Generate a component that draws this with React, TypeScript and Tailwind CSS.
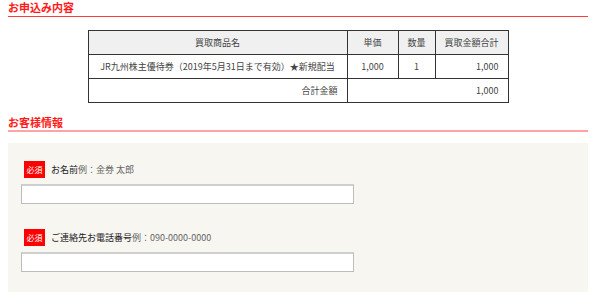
import React from "react";

const font = { fontFamily: '"Noto Sans CJK JP", "Noto Sans", sans-serif' };

function Field({ label, example }: { label: string; example: string }) {
  return (
    <div>
      <div className="flex items-center h-[17px] pl-[3px]">
        <span className="bg-[#ff0000] text-white text-[8px] w-[21px] h-[17px] flex items-center justify-center leading-none">
          必須
        </span>
        <span className="ml-[6px] text-[9px] text-[#222] leading-none">
          {label}
          <span className="text-[#666]">{example}</span>
        </span>
      </div>
      <div className="mt-[6px] w-[333px] h-[20px] bg-white border border-[#bdbdbd] border-t-2 border-t-[#cfcfcf]" />
    </div>
  );
}

export default function App() {
  return (
    <div className="w-[600px] h-[292px] bg-white overflow-hidden" style={font}>
      <div className="ml-2 w-[580px]">
        <div className="h-[17px] border-b border-[#ff3c3c] flex items-start">
          <h2 className="text-[11px] font-bold text-[#ff1a1a] leading-none mt-[2px]">お申込み内容</h2>
        </div>
        <table className="mt-[13px] mx-auto w-[420px] border-collapse text-[9px] text-[#444] table-fixed">
          <colgroup>
            <col className="w-[259px]" />
            <col className="w-[51px]" />
            <col className="w-[37px]" />
            <col className="w-[73px]" />
          </colgroup>
          <tbody>
            <tr className="h-[24px] bg-[#f0f0f0]">
              <td className="border border-[#333] text-center font-normal">買取商品名</td>
              <td className="border border-[#333] text-center">単価</td>
              <td className="border border-[#333] text-center">数量</td>
              <td className="border border-[#333] text-center">買取金額合計</td>
            </tr>
            <tr className="h-[24px]">
              <td className="border border-[#333] text-center whitespace-nowrap">JR九州株主優待券（2019年5月31日まで有効）★新規配当</td>
              <td className="border border-[#333] text-center">1,000</td>
              <td className="border border-[#333] text-center">1</td>
              <td className="border border-[#333] text-right pr-[9px]">1,000</td>
            </tr>
            <tr className="h-[24px]">
              <td className="border border-[#333] text-right pr-[9px]">合計金額</td>
              <td colSpan={3} className="border border-[#333] text-right pr-[9px]">1,000</td>
            </tr>
          </tbody>
        </table>
        <div className="mt-[9px] h-[20px] border-b-2 border-[#ffa3a3] flex items-start">
          <h2 className="text-[11px] font-bold text-[#ff1a1a] leading-none mt-[5px]">お客様情報</h2>
        </div>
        <div className="mt-[11px] bg-[#f8f6f1] h-[200px] px-[13px] pt-[18px] flex flex-col gap-[25px]">
          <Field label="お名前" example="例：金券 太郎" />
          <Field label="ご連絡先お電話番号" example="例：090-0000-0000" />
        </div>
      </div>
    </div>
  );
}
